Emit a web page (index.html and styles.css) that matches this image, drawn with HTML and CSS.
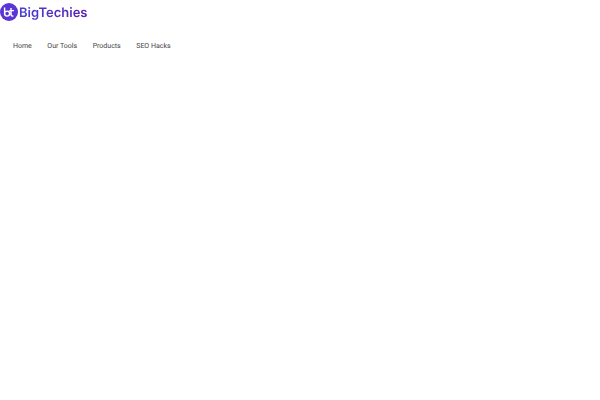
FILE: index.html
```html
<!DOCTYPE html>
<html lang="en">
<head>
    <meta charset="UTF-8">
    <meta name="viewport" content="width=device-width, initial-scale=1.0">
    <title>BigTechies</title>
    <link rel="stylesheet" href="styles.css">
</head>
<body>
    <header class="site_header">
        <a class="logo" href="#">
            <svg class="logo_icon" viewBox="0 0 18 18" aria-hidden="true">
                <circle cx="9" cy="9" r="9" fill="#5b34d6"/>
                <path d="M4.6 4.5V10.6A2.5 2.5 0 0 0 9.6 10.6A2.5 2.5 0 0 0 4.6 10.6M11 5V11.2Q11 13.1 13.4 13.1M9.2 7.6H14" fill="none" stroke="#fff" stroke-width="1.4"/>
            </svg>
            <span class="logo_text">BigTechies</span>
        </a>
        <nav class="main_nav">
            <a href="#">Home</a>
            <a href="#">Our Tools</a>
            <a href="#">Products</a>
            <a href="#">SEO Hacks</a>
        </nav>
    </header>
</body>
</html>
```

FILE: styles.css
```css
body {
    margin: 0;
    background-color: #fff;
    font-family: Roboto, sans-serif;
    text-rendering: geometricPrecision;
}

a {
    text-decoration: none;
}

.logo {
    display: flex;
    align-items: center;
    gap: 1px;
    height: 18px;
    padding-top: 3px;
}

.logo_icon {
    width: 18px;
    height: 18px;
}

.logo_text {
    margin-top: 1px;
    font-family: Inter, sans-serif;
    font-size: 13px;
    font-weight: 600;
    background: linear-gradient(90deg, #4a40d4, #5b1fb0);
    -webkit-background-clip: text;
    background-clip: text;
    color: transparent;
}

.main_nav {
    display: flex;
    gap: 15.5px;
    padding: 20px 13px 0;
}

.main_nav a {
    font-size: 7px;
    font-weight: 400;
    line-height: 10px;
    color: #444;
}
```
